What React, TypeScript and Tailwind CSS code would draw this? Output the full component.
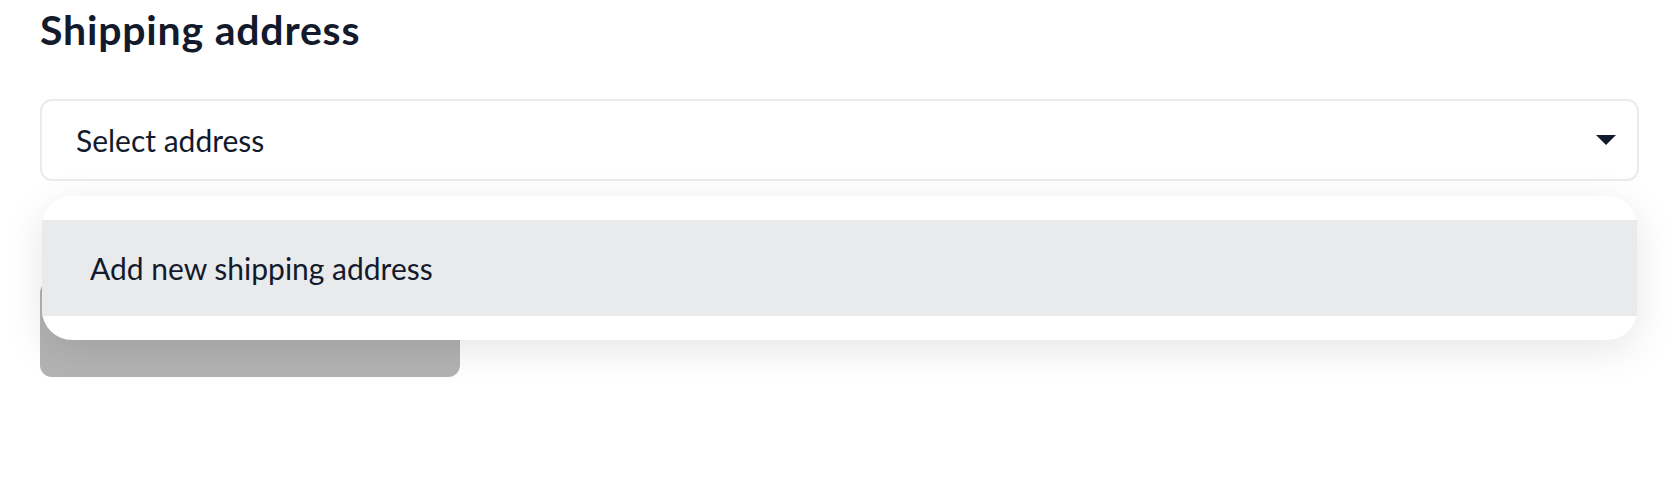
export default function App() {
  return (
    <div className="min-h-[492px] bg-white font-['Lato',sans-serif] text-[#131a2c]">
      <div className="ml-[40px] w-[1599px] pt-[4px]">
        <h2 className="text-[41px] font-bold leading-[52px] tracking-[0.8px]">
          Shipping address
        </h2>

        <div className="relative mt-[43px]">
          <div className="flex h-[82px] items-center justify-between rounded-[12px] border-2 border-[#ebebeb] bg-white pl-[34px] pr-[21px]">
            <span className="text-[30px] leading-none">Select address</span>
            <svg width="20" height="10" viewBox="0 0 20 10">
              <path d="M0 0 H20 L10 10 Z" fill="#131a2c" />
            </svg>
          </div>

          <div className="absolute left-[2px] right-[2px] top-[97px] z-10 rounded-[30px] bg-white py-[24px] shadow-[0_10px_40px_rgba(0,0,0,0.10)]">
            <div className="flex h-[96px] items-center bg-[#e9eaec] pl-[48px]">
              <span className="text-[30px] leading-none">Add new shipping address</span>
            </div>
          </div>

          <button className="mt-[100px] h-[96px] w-[420px] rounded-[12px] bg-[#b3b3b3]" />
        </div>
      </div>
    </div>
  );
}
